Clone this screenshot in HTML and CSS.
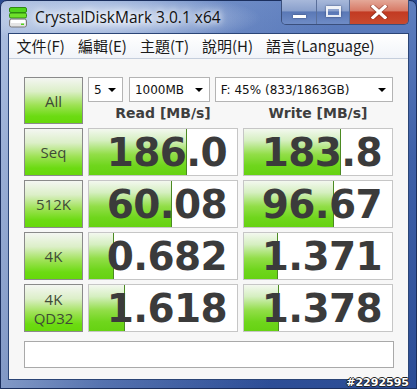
FILE: index.html
```html
<!DOCTYPE html>
<html lang="zh-Hant">
<head>
    <meta charset="UTF-8">
    <meta name="viewport" content="width=device-width, initial-scale=1.0">
    <title>CrystalDiskMark 3.0.1 x64</title>
    <link rel="stylesheet" href="styles.css">
</head>
<body>
    <div class="window">
        <!-- title bar -->
        <div class="titlebar">
            <svg class="appicon" width="18" height="21" viewBox="0 0 18 21">
                <rect x="0.5" y="0.5" width="17" height="5" rx="1.5" fill="#4fd41a" stroke="#2e8a10"/>
                <rect x="0.5" y="6" width="17" height="5" rx="1.5" fill="#6ee02a" stroke="#2e8a10"/>
                <rect x="0.5" y="12" width="17" height="8" rx="2" fill="#e4e4e4" stroke="#7a7a7a"/>
                <rect x="2" y="13" width="14" height="3" fill="#ffffff"/>
                <rect x="12" y="16.5" width="3" height="1.5" fill="#4fd41a"/>
            </svg>
            <span class="apptitle">CrystalDiskMark 3.0.1 x64</span>
            <div class="captions">
                <div class="capbtn minbtn"><span class="minbar"></span></div>
                <div class="capbtn maxbtn"><span class="maxbox"></span></div>
                <div class="capbtn closebtn">
                    <svg width="18" height="14" viewBox="0 0 18 14">
                        <path d="M3 1.5 L15 12.5 M15 1.5 L3 12.5" stroke="#6a2418" stroke-width="5" stroke-linecap="square" opacity="0.45"/>
                        <path d="M3 1.5 L15 12.5 M15 1.5 L3 12.5" stroke="#ffffff" stroke-width="3.2" stroke-linecap="square"/>
                    </svg>
                </div>
            </div>
        </div>

        <div class="client">
            <!-- menu -->
            <div class="menubar">
                <span class="menuitem">文件(F)</span>
                <span class="menuitem">編輯(E)</span>
                <span class="menuitem">主題(T)</span>
                <span class="menuitem">說明(H)</span>
                <span class="menuitem">語言(Language)</span>
            </div>

            <div class="content">
                <div class="grid">
                    <div class="testbtn">All</div>
                    <div class="topright">
                        <div class="combos">
                            <div class="combo c-count">5<span class="arrow"></span></div>
                            <div class="combo c-size">1000MB<span class="arrow"></span></div>
                            <div class="combo c-drive">F: 45% (833/1863GB)<span class="arrow"></span></div>
                        </div>
                        <div class="heads">
                            <div class="head">Read [MB/s]</div>
                            <div class="head">Write [MB/s]</div>
                        </div>
                    </div>

                    <div class="testbtn">Seq</div>
                    <div class="cell"><div class="bar" style="width: 98px"></div><span class="val">186.0</span></div>
                    <div class="cell"><div class="bar" style="width: 97px"></div><span class="val">183.8</span></div>

                    <div class="testbtn">512K</div>
                    <div class="cell"><div class="bar" style="width: 83px"></div><span class="val">60.08</span></div>
                    <div class="cell"><div class="bar" style="width: 90px"></div><span class="val">96.67</span></div>

                    <div class="testbtn">4K</div>
                    <div class="cell"><div class="bar" style="width: 25px"></div><span class="val">0.682</span></div>
                    <div class="cell"><div class="bar" style="width: 34px"></div><span class="val">1.371</span></div>

                    <div class="testbtn two">4K<br>QD32</div>
                    <div class="cell"><div class="bar" style="width: 36px"></div><span class="val">1.618</span></div>
                    <div class="cell"><div class="bar" style="width: 35px"></div><span class="val">1.378</span></div>
                </div>
                <div class="comment"></div>
            </div>
        </div>
        <div class="watermark">#2292595</div>
    </div>
</body>
</html>
```

FILE: styles.css
```css
html, body{
    margin: 0;
    padding: 0;
}
body{
    width: 417px;
    height: 389px;
    overflow: hidden;
    background: #2a4a90;
}
.window{
    position: relative;
    width: 417px;
    height: 389px;
    box-sizing: border-box;
    display: flex;
    flex-direction: column;
    border: 1px solid #1b2f5e;
    border-radius: 7px 7px 0 0;
    background:
        radial-gradient(ellipse 150px 26px at 110px 17px, rgba(230,238,250,0.85), rgba(230,238,250,0) 100%),
        linear-gradient(100deg, rgba(200,214,236,0.75) 0%, rgba(160,182,220,0.35) 35%, rgba(80,110,180,0) 70%),
        linear-gradient(to bottom, #5f7fbf 0%, #3e60a8 40%, #2c4d96 100%);
}
/* title bar */
.titlebar{
    height: 32px;
    display: flex;
    align-items: flex-start;
}
.appicon{
    margin: 6px 0 0 8px;
}
.apptitle{
    margin: 5px 0 0 8px;
    font-family: "Open Sans", "Noto Sans", sans-serif;
    font-size: 15.5px;
    color: #111;
    text-shadow: 0 0 6px #fff, 0 0 10px #fff;
}
.captions{
    margin-left: auto;
    margin-right: 7px;
    margin-top: -1px;
    display: flex;
    height: 24px;
    border: 1px solid #3a4f7c;
    border-top: none;
    border-radius: 0 0 5px 5px;
    overflow: hidden;
}
.capbtn{
    height: 24px;
    display: flex;
    align-items: center;
    justify-content: center;
    box-sizing: border-box;
}
.minbtn, .maxbtn{
    background: linear-gradient(to bottom, #a7b8da 0%, #8aa0cc 45%, #5a78b6 50%, #6f8cc6 100%);
    border-right: 1px solid #5a6f9a;
}
.minbtn{ width: 35px; }
.maxbtn{ width: 33px; }
.closebtn{
    width: 58px;
    background: linear-gradient(to bottom, #e4a898 0%, #d77a66 45%, #c23a22 50%, #c84a2e 100%);
}
.minbar{
    display: block;
    width: 13px;
    height: 3px;
    margin-top: 9px;
    background: #fff;
    box-shadow: 0 0 2px #2a3a60;
}
.maxbox{
    display: block;
    width: 11px;
    height: 6px;
    margin-top: -2px;
    border: 2px solid #fff;
    border-top-width: 3px;
    box-shadow: 0 0 2px #2a3a60;
    opacity: 0.85;
}
/* client area */
.client{
    flex: 1;
    margin: 0 7px 8px 7px;
    border: 1px solid #2b4576;
    background: #f7f7f7;
    display: flex;
    flex-direction: column;
}
.menubar{
    height: 24px;
    padding-left: 1px;
    border-bottom: 1px solid #c5cedc;
    background: linear-gradient(to bottom, #ffffff, #f1f4f9);
    display: flex;
    align-items: center;
    font-family: "Noto Sans CJK TC", "Noto Sans", sans-serif;
    font-size: 15px;
    color: #1a1a1a;
}
.menuitem{
    padding: 0 6.5px;
    line-height: 24px;
}
.content{
    padding: 18px 0 0 15px;
}
.grid{
    display: grid;
    grid-template-columns: 59px 150px 150px;
    grid-template-rows: 47px 48px 48px 48px 48px;
    column-gap: 5px;
    row-gap: 4px;
}
.testbtn{
    box-sizing: border-box;
    border: 1px solid #8a8a8a;
    background: linear-gradient(to bottom, #f4f6f2 0%, #dcefc8 30%, #9ee255 60%, #6cdb12 85%, #66d80a 100%);
    display: flex;
    align-items: center;
    justify-content: center;
    text-align: center;
    font-family: "Open Sans", sans-serif;
    font-size: 15px;
    color: #3f4a36;
}
.testbtn.two{
    line-height: 19px;
    padding-top: 1px;
}
.topright{
    grid-column: 2 / 4;
    display: flex;
    flex-direction: column;
}
.combos{
    display: flex;
    height: 25px;
}
.combo{
    box-sizing: border-box;
    height: 25px;
    border: 1px solid #b4b4b4;
    background: #fff;
    display: flex;
    align-items: center;
    padding: 0 6px 0 5px;
    font-family: "DejaVu Sans", sans-serif;
    font-size: 12px;
    color: #111;
}
.c-count{ width: 35px; }
.c-size{ width: 81px; margin-left: 6px; }
.c-drive{ width: 179px; margin-left: 5px; }
.arrow{
    margin-left: auto;
    width: 0;
    height: 0;
    border-left: 4px solid transparent;
    border-right: 4px solid transparent;
    border-top: 4px solid #000;
}
.heads{
    display: flex;
    gap: 5px;
    height: 22px;
}
.head{
    width: 150px;
    text-align: center;
    line-height: 22px;
    font-family: "DejaVu Sans", sans-serif;
    font-weight: bold;
    font-size: 14px;
    color: #3e3e3e;
}
.cell{
    position: relative;
    box-sizing: border-box;
    border: 1px solid #c6c6c6;
    background: #fff;
    display: flex;
    align-items: center;
    justify-content: flex-end;
    padding-right: 10px;
    overflow: hidden;
}
.bar{
    position: absolute;
    left: 0;
    top: 0;
    bottom: 0;
    box-sizing: border-box;
    border-right: 1px solid #4b8a22;
    background: linear-gradient(to bottom, #f3f8ef 0%, #d5efc0 25%, #92de48 55%, #6fd61c 80%, #66d212 100%);
}
.val{
    position: relative;
    font-family: "DejaVu Sans", sans-serif;
    font-weight: bold;
    font-size: 39px;
    letter-spacing: -0.6px;
    line-height: 1;
    color: #3b3b3b;
}
.comment{
    box-sizing: border-box;
    width: 370px;
    height: 27px;
    margin-top: 9px;
    border: 1px solid #a9a9a9;
    background: #fff;
}
.watermark{
    position: absolute;
    right: 7px;
    bottom: -1px;
    font-family: "DejaVu Sans", sans-serif;
    font-size: 11px;
    font-weight: bold;
    color: #fff;
    text-shadow: -1px 0 #222, 1px 0 #222, 0 -1px #222, 0 1px #222;
}
```
